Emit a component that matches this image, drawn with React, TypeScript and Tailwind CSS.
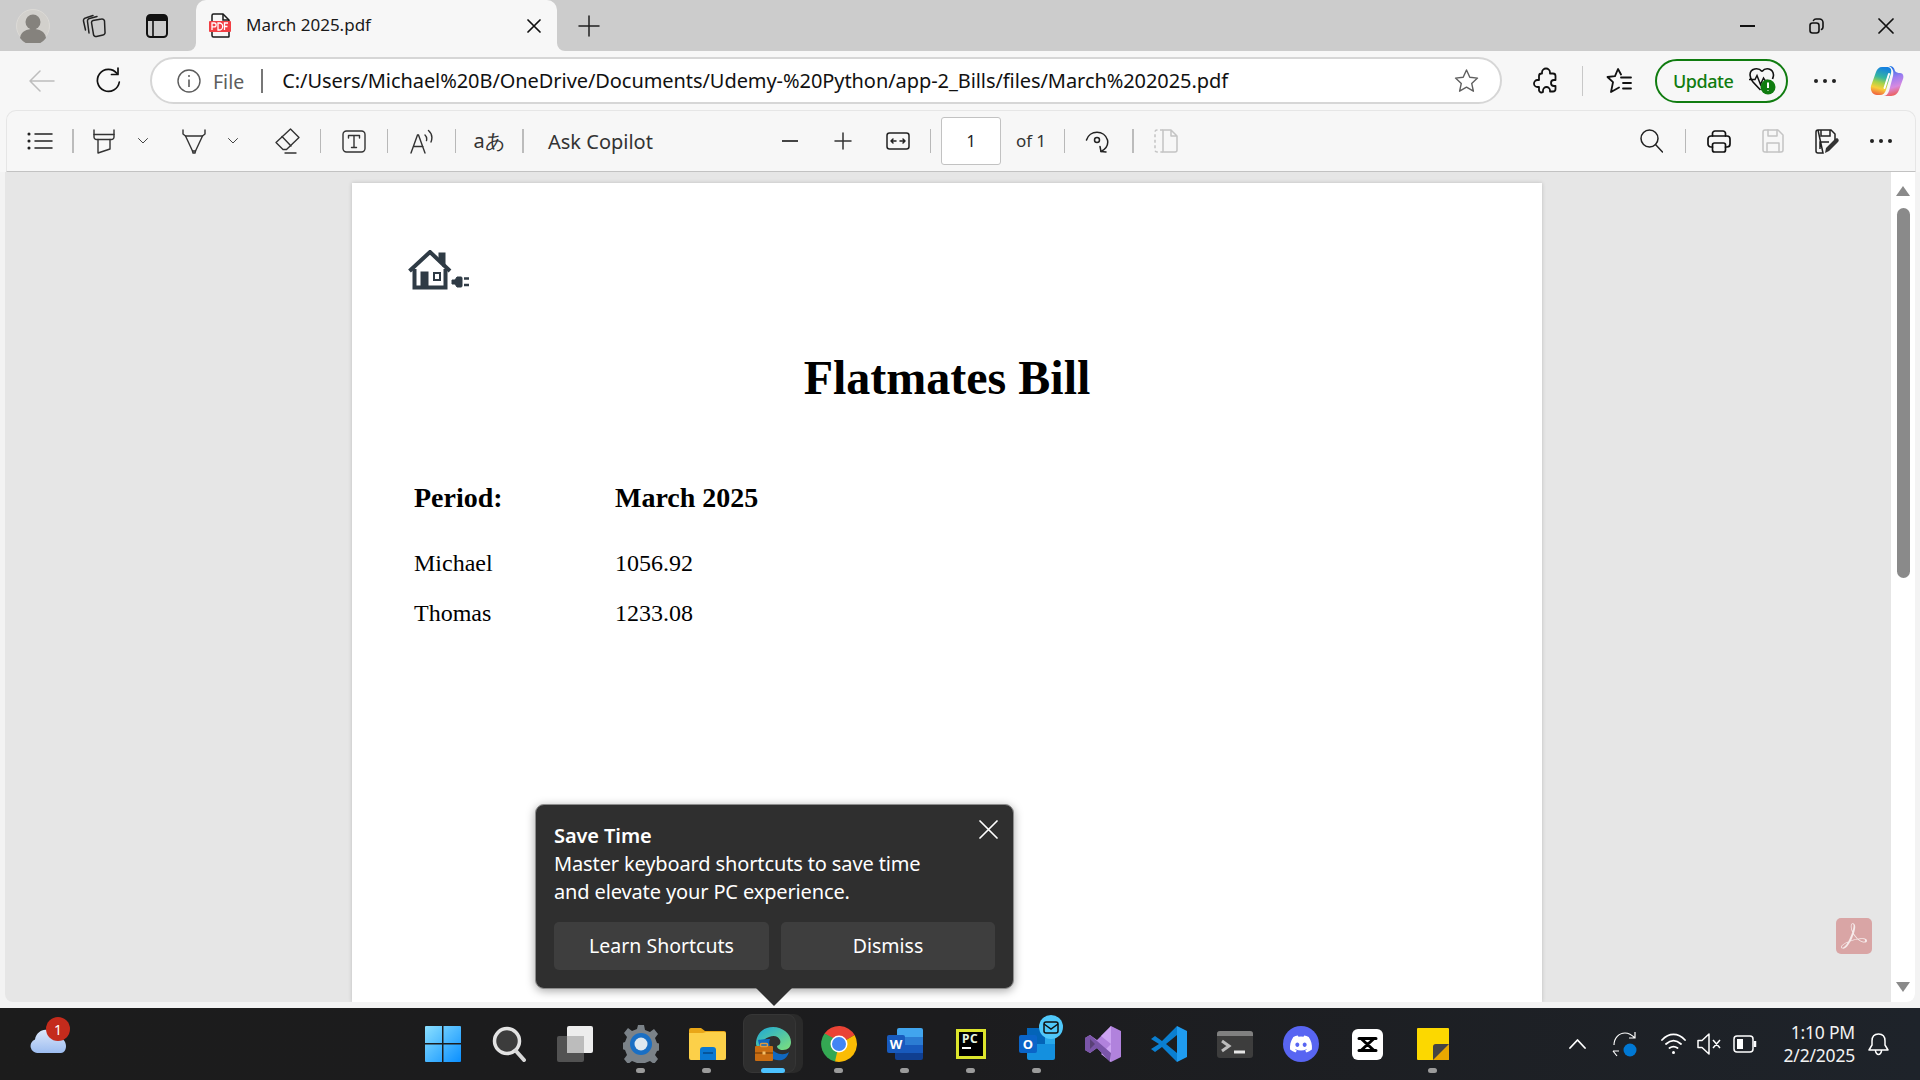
import { ReactNode } from 'react';
import { FaDiscord } from 'react-icons/fa6';
import { SiAdobeacrobatreader } from 'react-icons/si';

const uiFont = 'font-["Noto_Sans",sans-serif]';

const Slot = ({ w, children }: { w: string; children?: ReactNode }) => (
  <div className={`${w} h-full shrink-0 flex items-center justify-center`}>{children}</div>
);

const Sep = () => <div className="w-px h-[24px] shrink-0 bg-[#b8b8b8]" />;
const SepBold = () => <div className="w-[2px] h-[24px] shrink-0 bg-[#bcbcbc]" />;

const Ico = ({ w, h, vb, children, sw = 1.6, stroke = '#1f1f1f' }: { w: number; h: number; vb: string; children: ReactNode; sw?: number; stroke?: string }) => (
  <svg width={w} height={h} viewBox={vb} fill="none" stroke={stroke} strokeWidth={sw} strokeLinecap="round" strokeLinejoin="round">
    {children}
  </svg>
);

const Chevron = () => (
  <Ico w={10} h={6} vb="0 0 10 6" sw={1} stroke="#444"><path d="M.5.5 5 5 9.5.5" /></Ico>
);

const Dots = () => (
  <div className="flex gap-[5px]">
    <i className="w-[4px] h-[4px] rounded-full bg-[#222]" />
    <i className="w-[4px] h-[4px] rounded-full bg-[#222]" />
    <i className="w-[4px] h-[4px] rounded-full bg-[#222]" />
  </div>
);

const TabBar = () => (
  <div className="h-[51px] shrink-0 bg-[#cccccc] flex items-center">
    <Slot w="w-[66px]">
      <svg width="34" height="34" viewBox="0 0 34 34">
        <circle cx="17" cy="17" r="16.5" fill="#d2d0cc" stroke="#dcdad6" />
        <circle cx="17" cy="13" r="7.5" fill="#85827d" />
        <path d="M4 29c1-7 7-9 13-9s12 2 13 9a16 16 0 0 1-26 0Z" fill="#85827d" />
      </svg>
    </Slot>
    <Slot w="w-[54px]">
      <Ico w={25} h={24} vb="0 0 25 24" sw={1.5} stroke="#222">
        <path d="M10.500 8.500a2 2 0 0 1 1.500-2l8.500-1.500a2.500 2.500 0 0 1 3 2l.5 11a2.500 2.500 0 0 1-2 3l-6.500 1.500a2.500 2.500 0 0 1-3-2Z" />
        <path d="M8 19 6.500 7.500a2.500 2.500 0 0 1 2-3L16 2.500" />
        <path d="M4.500 16 2.500 7a2.500 2.500 0 0 1 2-3L12 1.500" />
      </Ico>
    </Slot>
    <div className="w-[3px] shrink-0" />
    <Slot w="w-[67px]">
      <svg width="22" height="24" viewBox="0 0 22 24" fill="none">
        <rect x="1" y="1" width="20" height="22" rx="3.500" stroke="#111" strokeWidth="2" />
        <path d="M1 4.500a3.500 3.500 0 0 1 3.500-3.500h13A3.500 3.500 0 0 1 21 4.500V7H1Z" fill="#111" />
        <path d="M7 7v16" stroke="#111" strokeWidth="1.600" />
      </svg>
    </Slot>
    <div className="relative w-[361px] h-full shrink-0 ml-[6px] bg-[#f7f7f7] rounded-t-[10px] flex items-center">
      <svg className="absolute -left-[8px] bottom-0" width="8" height="8" viewBox="0 0 8 8"><path d="M8 0v8H0a8 8 0 0 0 8-8Z" fill="#f7f7f7" /></svg>
      <svg className="absolute -right-[8px] bottom-0" width="8" height="8" viewBox="0 0 8 8"><path d="M0 0v8h8a8 8 0 0 1-8-8Z" fill="#f7f7f7" /></svg>
      <div className="w-[50px] flex justify-center">
        <svg width="24" height="25" viewBox="0 0 24 25" fill="none">
          <path d="M3 9V2.500A1.500 1.500 0 0 1 4.500 1H14l6 6v16.500a.5.5 0 0 1-.5.500H4.500A1.500 1.500 0 0 1 3 22.500V18" stroke="#1a1a1a" strokeWidth="1.500" />
          <path d="M14 1v6h6" stroke="#1a1a1a" strokeWidth="1.500" />
          <rect x="0" y="8" width="22" height="11" rx="1" fill="#f23f44" />
          <path d="M3 17v-7h2.200a1.600 1.600 0 0 1 0 3.800H3M9 10v7h1.200a2.500 2.500 0 0 0 0-7ZM15.500 17v-7h3.500M15.500 13.500h3" stroke="#fff" strokeWidth="1.300" />
        </svg>
      </div>
      <span className="-mt-[2px] text-[17px] text-[#1a1a1a]">March 2025.pdf</span>
      <div className="ml-auto mr-[16px]">
        <Ico w={14} h={14} vb="0 0 14 14" sw={1.7} stroke="#111"><path d="m1 1 12 12M13 1 1 13" /></Ico>
      </div>
    </div>
    <Slot w="w-[64px]">
      <Ico w={22} h={22} vb="0 0 22 22" sw={1.5}><path d="M11 1v20M1 11h20" /></Ico>
    </Slot>
    <div className="ml-auto flex h-full items-center">
      <Slot w="w-[69px]"><div className="w-[15px] h-[2px] bg-[#111]" /></Slot>
      <Slot w="w-[69px]">
        <Ico w={15} h={16} vb="0 0 15 16" sw={1.6} stroke="#111">
          <rect x="1" y="5" width="9" height="10" rx="2.500" />
          <path d="M4.500 2.500c.5-1 1.500-1.500 2.500-1.500h3.500A3.500 3.500 0 0 1 14 4.500V9c0 1-.5 2-1.500 2.500" />
        </Ico>
      </Slot>
      <Slot w="w-[69px]"><Ico w={16} h={16} vb="0 0 16 16" sw={1.7} stroke="#111"><path d="m1 1 14 14M15 1 1 15" /></Ico></Slot>
    </div>
  </div>
);

const AddressBar = () => (
  <div className="h-[59px] shrink-0 bg-[#f7f7f7] flex items-center">
    <div className="w-[9px] shrink-0" />
    <Slot w="w-[66px]">
      <Ico w={26} h={24} vb="0 0 26 24" sw={1.5} stroke="#bdbdbd"><path d="M25 12H1M11 2 1 12l10 10" /></Ico>
    </Slot>
    <Slot w="w-[66px]">
      <Ico w={26} h={27} vb="0 0 26 27" sw={1.7} stroke="#111">
        <path d="M22 6.500A11 11 0 1 0 24.300 15" />
        <path d="M23 1v6.500h-6.500" />
      </Ico>
    </Slot>
    <div className="ml-[9px] w-[1352px] h-[47px] shrink-0 bg-white border-2 border-[#d6d6d6] rounded-full flex items-center">
      <div className="w-[36px] shrink-0 ml-[13px] flex justify-end">
        <svg width="24" height="24" viewBox="0 0 24 24" fill="none" stroke="#5c5c5c" strokeWidth="1.400">
          <circle cx="12" cy="12" r="11" />
          <path d="M12 10.500V18" strokeWidth="1.600" />
          <circle cx="12" cy="7" r="1" fill="#5c5c5c" stroke="none" />
        </svg>
      </div>
      <span className="ml-[12px] mt-[2px] text-[19.500px] text-[#5d5d5d]">File</span>
      <div className="ml-[17px] w-[2px] h-[24px] bg-[#777]" />
      <span className="ml-[19px] mt-[1px] text-[20px] text-[#111] whitespace-nowrap tracking-[-0.07px]">C:/Users/Michael%20B/OneDrive/Documents/Udemy-%20Python/app-2_Bills/files/March%202025.pdf</span>
      <div className="ml-auto mr-[21px]">
        <Ico w={25} h={24} vb="0 0 25 24" sw={1.4} stroke="#5f5f5f"><path d="m12.500 1 3.300 7.300 7.700.8-5.800 5.300 1.700 7.800-6.900-4-6.900 4 1.700-7.800L1.500 9.100l7.700-.8Z" /></Ico>
      </div>
    </div>
    <div className="w-[22px] shrink-0" />
    <Slot w="w-[42px]">
      <Ico w={24} h={28} vb="0 0 24 28" sw={1.8} stroke="#111">
        <path d="M9 5.500C9 3 11 1.500 13 1.500s4 1.500 4 4v1h3a2.500 2.500 0 0 1 2.500 2.500v4h-1.500a3 3 0 0 0 0 6h1.500v3A2.500 2.500 0 0 1 20 24.500h-3v-1a3.500 3.500 0 0 0-7 0v1.500c-1.500 1-3.500.5-4-1.500v-3.500H4.500a3.500 3.500 0 0 1 0-7H6V9a2.500 2.500 0 0 1 2.500-2.500H9Z" />
      </Ico>
    </Slot>
    <div className="w-[16px] shrink-0" />
    <div className="w-px h-[30px] bg-[#c8c8c8] shrink-0" />
    <Slot w="w-[72px]">
      <Ico w={26} h={26} vb="0 0 26 26" sw={1.8} stroke="#111">
        <path d="M15 6.500 12 1 9 8.200 1.500 9l5.500 5.200L5 24l8-4.500" />
        <path d="M15 9.500h10M17 15h8M17 20.500h8" />
      </Ico>
    </Slot>
    <div className="w-[133px] h-[44px] shrink-0 border-2 border-[#107c10] rounded-full flex items-center">
      <span className="ml-[16px] mt-[1px] text-[18px] tracking-[-0.45px] text-[#107c10] font-medium">Update</span>
      <svg className="ml-[15px]" width="28" height="28" viewBox="0 0 28 28" fill="none">
        <path d="M14 4.500C10.500 0 2 1 2 8c0 3 1.500 5 3 7l7.500 8" stroke="#111" strokeWidth="1.600" />
        <path d="M14 4.500C17.500 0 25 1 25.500 8c0 1.500-.5 2.500-1 4" stroke="#111" strokeWidth="1.600" />
        <path d="M1 12.500h6l2-4 3.500 9 3-6.500 1.500 2.500h3" stroke="#111" strokeWidth="1.500" />
        <circle cx="20" cy="20" r="7.500" fill="#107c10" />
        <path d="M20 15.500v5.500M20 23.500v.5" stroke="#fff" strokeWidth="2" />
      </svg>
    </div>
    <Slot w="w-[74px]"><Dots /></Slot>
    <Slot w="w-[50px]">
      <svg width="34" height="30" viewBox="0 0 34 30">
        <defs>
          <linearGradient id="cpL" x1="0.5" y1="0" x2="0.3" y2="1">
            <stop offset="0" stopColor="#1581e0" /><stop offset=".35" stopColor="#35b6a0" /><stop offset=".55" stopColor="#a6d24a" /><stop offset=".75" stopColor="#f8cf3a" /><stop offset="1" stopColor="#f0603f" />
          </linearGradient>
          <linearGradient id="cpR" x1="0.4" y1="0" x2="0.6" y2="1">
            <stop offset="0" stopColor="#0f6fe6" /><stop offset=".4" stopColor="#9d7df0" /><stop offset=".7" stopColor="#d88ae0" /><stop offset="1" stopColor="#ef5a4a" />
          </linearGradient>
        </defs>
        <path d="M12 1c-3 0-5 2-6 5L1 20c-1 5 2 9 6 9h3c3 0 5-2 6-5l5-17c1-4-1-6-4-6Z" fill="url(#cpL)" />
        <path d="M19 0c3 0 5 1 6 5 1 1.500 3 2 5 2 3 0 4 3 3 6l-4 11c-1 3-4 6-8 6h-8c3 0 5-2 6-5l4-15c1-4 0-8-4-10Z" fill="url(#cpR)" />
        <path d="M19 8 14.500 22" stroke="#fff" strokeWidth="2" strokeLinecap="round" />
      </svg>
    </Slot>
  </div>
);

const PdfToolbar = () => (
  <div className="pl-[6px] pr-[4px] bg-[#f7f7f7] shrink-0">
    <div className="h-[62px] bg-[#f7f7f7] border-t border-l border-r border-b border-t-[#e6e6e6] border-l-[#e6e6e6] border-r-[#e6e6e6] border-b-[#c2c2c2] rounded-t-[10px] flex items-center">
      <Slot w="w-[65px]">
        <Ico w={26} h={18} vb="0 0 26 18" sw={1.5} stroke="#222">
          <path d="M8 2h17M8 9h17M8 16h17" />
          <circle cx="2" cy="2" r=".8" fill="#222" />
          <circle cx="2" cy="9" r=".8" fill="#222" />
          <circle cx="2" cy="16" r=".8" fill="#222" />
        </Ico>
      </Slot>
      <SepBold />
      <div className="w-px shrink-0" />
      <Slot w="w-[58px]">
        <Ico w={22} h={25} vb="0 0 22 25" sw={1.4} stroke="#333">
          <path d="M1 1v7a2.500 2.500 0 0 0 2.500 2.500h15A2.500 2.500 0 0 0 21 8V1" />
          <path d="M1 5.500h20" />
          <path d="M5 10.500V24l12-4v-9.500" />
        </Ico>
      </Slot>
      <Slot w="w-[20px]"><Chevron /></Slot>
      <div className="w-[7px] shrink-0" />
      <Slot w="w-[68px]">
        <Ico w={24} h={25} vb="0 0 24 25" sw={1.4} stroke="#333">
          <path d="M1 1v4l2.500 2h17L23 5V1" />
          <path d="M3.500 7 10.500 22h3L20.500 7" />
          <path d="M10.500 22l.5 2h2l.5-2" />
        </Ico>
      </Slot>
      <Slot w="w-[10px]"><Chevron /></Slot>
      <div className="w-[16px] shrink-0" />
      <Slot w="w-[66px]">
        <Ico w={25} h={26} vb="0 0 25 26" sw={1.4} stroke="#333">
          <path d="M15.500 1 24 9.500 11.500 21.500H8L1 14.500Z" />
          <path d="M7 8.500 16 18" />
          <path d="M10 25h11" />
        </Ico>
      </Slot>
      <Sep />
      <Slot w="w-[66px]">
        <Ico w={24} h={23} vb="0 0 24 23" sw={1.4} stroke="#333">
          <rect x="1" y="1" width="22" height="21" rx="3.500" />
          <path d="M6.500 8V5.500h11V8M12 5.500v12M9.500 17.500h5" />
        </Ico>
      </Slot>
      <Sep />
      <Slot w="w-[67px]">
        <svg width="24" height="25" viewBox="0 0 24 25" fill="none" stroke="#333" strokeWidth="1.400" strokeLinecap="round">
          <path d="m1 24 6.500-18h1L15 24M3.500 17.500h9.500" />
          <path d="M15 6c1.500 1.500 2 3.500 1.500 5.500M18.500 1.500c3.500 3 4 7.500 2.500 11.500" />
        </svg>
      </Slot>
      <Sep />
      <Slot w="w-[66px]">
        <span className="text-[20px] leading-none text-[#333]">aあ</span>
      </Slot>
      <SepBold />
      <span className="ml-[24px] mt-[2px] w-[212px] shrink-0 text-[20px] text-[#333]">Ask Copilot</span>
      <Slot w="w-[60px]"><div className="w-[16px] h-[1.500px] bg-[#444]" /></Slot>
      <Slot w="w-[46px]"><Ico w={18} h={18} vb="0 0 18 18" sw={1.5} stroke="#333"><path d="M9 1v16M1 9h16" /></Ico></Slot>
      <Slot w="w-[64px]">
        <Ico w={24} h={18} vb="0 0 24 18" sw={1.5} stroke="#222">
          <rect x="1" y="1" width="22" height="16" rx="2.500" />
          <path d="M5 9h5M5 9l2-2M5 9l2 2M14 9h5M19 9l-2-2M19 9l-2 2" />
        </Ico>
      </Slot>
      <Sep />
      <div className="ml-[10px] w-[60px] h-[48px] shrink-0 bg-white border border-[#c2c2c2] rounded-[3px] flex items-center justify-center text-[16px] text-[#222]">1</div>
      <span className="ml-[15px] w-[49px] shrink-0 text-[17px] tracking-[-0.1px] text-[#333]">of 1</span>
      <div className="-ml-[1px]"><Sep /></div>
      <Slot w="w-[64px]">
        <svg width="24" height="26" viewBox="0 0 24 26" fill="none" stroke="#222" strokeWidth="1.500" strokeLinecap="round" strokeLinejoin="round">
          <path d="M1.500 12a11 11 0 0 1 21 0c1 5-1.500 9-6.500 11.500" />
          <circle cx="12" cy="12" r="2.500" />
          <path d="m15 18.500 1 5 5 .5" />
        </svg>
      </Slot>
      <div className="w-[3px] shrink-0" />
      <SepBold />
      <Slot w="w-[64px]">
        <svg width="24" height="24" viewBox="0 0 24 24" fill="none" stroke="#c4c4c4" strokeWidth="1.500" strokeLinejoin="round">
          <path d="M9 1H3a2 2 0 0 0-2 2v18a2 2 0 0 0 2 2h6" strokeDasharray="3 2.500" />
          <path d="M9 1h8l6 6v14a2 2 0 0 1-2 2H9ZM17 1v6h6" />
        </svg>
      </Slot>
      <div className="ml-auto flex h-full items-center">
        <Slot w="w-[68px]">
          <Ico w={23} h={24} vb="0 0 23 24" sw={1.5} stroke="#222"><circle cx="9.500" cy="9.500" r="8.500" /><path d="m15.500 15.500 7 7.500" /></Ico>
        </Slot>
        <Sep />
        <div className="w-[13px] shrink-0" />
        <Slot w="w-[40px]">
          <Ico w={24} h={23} vb="0 0 24 23" sw={1.7} stroke="#111">
            <path d="M5.500 6V3.500A2.500 2.500 0 0 1 8 1h8a2.500 2.500 0 0 1 2.500 2.500V6" />
            <path d="M5.500 17H4a3 3 0 0 1-3-3V9a3 3 0 0 1 3-3h16a3 3 0 0 1 3 3v5a3 3 0 0 1-3 3h-1.500" />
            <rect x="5.500" y="13" width="13" height="9" rx="2" />
          </Ico>
        </Slot>
        <Slot w="w-[68px]">
          <Ico w={22} h={24} vb="0 0 22 24" sw={1.5} stroke="#c4c4c4">
            <path d="M3 1h13l5 5v15a2 2 0 0 1-2 2H3a2 2 0 0 1-2-2V3a2 2 0 0 1 2-2Z" />
            <path d="M6 1v6h9V1M5 23v-9h12v9" />
          </Ico>
        </Slot>
        <Slot w="w-[40px]">
          <svg width="24" height="25" viewBox="0 0 24 25" fill="none">
            <path d="M3 1h13l4 4v6M8 24H3a2 2 0 0 1-2-2V3a2 2 0 0 1 2-2ZM6 1v6h9V1M5 20v-7h9" stroke="#222" strokeWidth="1.500" />
            <path d="m10 24 1-5 9-9c1-1 3-1 3.500.5.500 1 0 2-.5 2.500l-9 9Z" fill="#333" />
          </svg>
        </Slot>
        <Slot w="w-[68px]"><Dots /></Slot>
      </div>
    </div>
  </div>
);

const HouseLogo = () => (
  <svg width="62" height="40" viewBox="0 0 62 40" fill="none" stroke="#2f3b45">
    <path d="M1.500 21 22 2l20 19" strokeWidth="4" />
    <path d="M32 10V4h4v13" strokeWidth="3" fill="#2f3b45" />
    <path d="M6.500 19v18.500h31V19" strokeWidth="4" />
    <rect x="13" y="22" width="7" height="15" fill="#2f3b45" strokeWidth="1" />
    <rect x="26" y="23" width="6" height="7" strokeWidth="2" />
    <path d="M44 30h3l2-3h4a1 1 0 0 1 1 1v8a1 1 0 0 1-1 1h-4l-2-3h-3Z" fill="#2f3b45" strokeWidth="1" />
    <path d="M56 28.500h5M56 35h5" strokeWidth="2.500" />
  </svg>
);

const PdfViewer = () => (
  <div className="relative flex-1 min-h-0 bg-[#e6e6e6] ml-[5px] mr-[5px] rounded-bl-[8px] rounded-br-[8px] overflow-hidden flex">
    <div className="w-[347px] shrink-0" />
    <div className="w-[1190px] shrink-0 mt-[11px] bg-white shadow-[0_0_4px_rgba(0,0,0,0.18)] pt-[67px] pl-[56px] font-['Liberation_Serif',serif] text-black">
      <HouseLogo />
      <div className="mt-[60px] -ml-[56px] text-center text-[48px] leading-[56px] font-bold">Flatmates Bill</div>
      <div className="mt-[78px] ml-[6px] grid grid-cols-[201px_1fr] text-[24px] leading-[28px]">
        <div className="font-bold text-[28px] h-[65px]">Period:</div>
        <div className="font-bold text-[28px]">March 2025</div>
        <div className="h-[50px]">Michael</div>
        <div>1056.92</div>
        <div>Thomas</div>
        <div>1233.08</div>
      </div>
    </div>
    <div className="ml-auto w-[24px] shrink-0 bg-white flex flex-col items-center relative">
      <div className="mt-[14px] w-0 h-0 border-l-[7px] border-r-[7px] border-b-[10px] border-l-transparent border-r-transparent border-b-[#8a8a8a]" />
      <div className="mt-[12px] w-[13px] h-[370px] rounded-full bg-[#8a8a8a]" />
      <div className="mt-auto mb-[10px] w-0 h-0 border-l-[7px] border-r-[7px] border-t-[10px] border-l-transparent border-r-transparent border-t-[#8a8a8a]" />
    </div>
    <div className="absolute left-[1831px] top-[746px] w-[36px] h-[36px] rounded-[5px] bg-[#d9a5a5] flex items-center justify-center">
      <SiAdobeacrobatreader className="w-[26px] h-[26px] text-[#f6eaea]" />
    </div>
  </div>
);

const Tooltip = () => (
  <div className={`absolute left-[535px] top-[804px] w-[479px] h-[185px] bg-[#2f2f2f] border border-[#8d8d8d] rounded-[9px] shadow-[0_2px_10px_rgba(0,0,0,0.35)] ${uiFont} text-white`}>
    <div className="pt-[17px] pl-[18px] text-[20px] leading-[28px]">
      <div className="font-semibold tracking-[-0.1px]">Save Time</div>
      <div className="tracking-[-0.13px]">Master keyboard shortcuts to save time</div>
      <div className="tracking-[-0.13px]">and elevate your PC experience.</div>
    </div>
    <div className="absolute left-[443px] top-[15px]">
      <Ico w={19} h={19} vb="0 0 19 19" sw={1.700} stroke="#fff"><path d="m1 1 17 17M18 1 1 18" /></Ico>
    </div>
    <div className="mt-[16px] ml-[18px] flex gap-[12px] text-[19.500px]">
      <div className="w-[215px] h-[48px] rounded-[5px] bg-[#3e3e3e] flex items-center justify-center">Learn Shortcuts</div>
      <div className="w-[214px] h-[48px] rounded-[5px] bg-[#3e3e3e] flex items-center justify-center">Dismiss</div>
    </div>
    <div className="absolute left-[220px] top-[183px] w-0 h-0 border-l-[18px] border-r-[18px] border-t-[18px] border-l-transparent border-r-transparent border-t-[#2f2f2f]" />
  </div>
);

const AppIcon = ({ dot, active, children }: { dot?: boolean; active?: boolean; children: ReactNode }) => (
  <div className="relative w-[66px] h-full shrink-0 flex items-center justify-center">
    {active && (
      <>
        <div className="absolute left-[30px] top-[6px] w-[33px] h-[59px] rounded-[9px] bg-[#2a2a2a]" />
        <div className="absolute left-[3px] top-[6px] w-[53px] h-[59px] rounded-[9px] bg-[#2e2e2e] border border-[#363636]" />
      </>
    )}
    <div className="relative">{children}</div>
    {dot && <div className="absolute left-[28px] bottom-[7px] w-[9px] h-[5px] rounded-full bg-[#9b9b9b]" />}
    {active && <div className="absolute left-[21px] bottom-[7px] w-[24px] h-[5px] rounded-full bg-[#4cc2ff]" />}
  </div>
);

const StartLogo = () => (
  <svg width="36" height="36" viewBox="0 0 36 36">
    <defs>
      <linearGradient id="st" x1="0" y1="0" x2="1" y2="1"><stop offset="0" stopColor="#8be0ff" /><stop offset="1" stopColor="#0a8fff" /></linearGradient>
    </defs>
    <path d="M1 0h16v17H0V1a1 1 0 0 1 1-1ZM18.500 0H35a1 1 0 0 1 1 1v16H18.500ZM0 18.500h17V36H1a1 1 0 0 1-1-1ZM18.500 18.500H36V35a1 1 0 0 1-1 1H18.500Z" fill="url(#st)" />
  </svg>
);

const Taskbar = () => (
  <div className={`h-[72px] shrink-0 flex items-center bg-gradient-to-r from-[#1c1c1c] via-[#1c1c1e] to-[#1e232a] ${uiFont}`}>
    <div className="relative w-[410px] h-full shrink-0">
      <svg className="absolute left-[30px] top-[20px]" width="37" height="25" viewBox="0 0 37 25">
        <defs><linearGradient id="cl" x1="0" y1="0" x2="0" y2="1"><stop offset="0" stopColor="#dbe7fb" /><stop offset="1" stopColor="#9dbdf0" /></linearGradient></defs>
        <path d="M8 25a7 7 0 0 1-3-13.500C6 5 12 1 17 2c5 0 9 3 10 7 5 0 9 4 9 9 0 4-2 7-5 7Z" fill="url(#cl)" />
      </svg>
      <div className="absolute left-[46px] top-[9px] w-[24px] h-[24px] rounded-full bg-[#c42b1c] flex items-center justify-center text-white text-[14px]">1</div>
    </div>
    <div className="flex h-full">
      <AppIcon><StartLogo /></AppIcon>
      <AppIcon>
        <svg width="34" height="36" viewBox="0 0 34 36" fill="none">
          <circle cx="15" cy="15" r="12.500" fill="#3c3c3c" stroke="#e3e3e3" strokeWidth="3.500" />
          <path d="m24 25 8 9" stroke="#d8d8d8" strokeWidth="4" strokeLinecap="round" />
        </svg>
      </AppIcon>
      <AppIcon>
        <svg width="36" height="36" viewBox="0 0 36 36">
          <rect x="10" y="0" width="26" height="27" rx="2" fill="#ededed" />
          <rect x="0" y="10" width="27" height="26" rx="2" fill="#5c5c5c" fillOpacity=".85" />
          <rect x="10" y="10" width="17" height="17" fill="#bcbcbc" />
        </svg>
      </AppIcon>
      <AppIcon dot>
        <svg width="36" height="38" viewBox="0 0 36 38">
          <path d="M15 0h6l1 5 5 2 4-3 4 5-3 4 2 5 4 1v6l-4 1-2 4 3 4-4 5-4-3-5 2-1 4h-6l-1-4-5-2-4 3-4-5 3-4-2-5-3-1v-6l3-1 2-5-3-4 4-5 4 3 5-2Z" fill="#7b8288" />
          <circle cx="18" cy="19" r="11" fill="#1a6fc4" />
          <circle cx="18" cy="19" r="6.500" fill="#dfe8ef" />
        </svg>
      </AppIcon>
      <AppIcon dot>
        <svg width="37" height="32" viewBox="0 0 37 32">
          <path d="M0 2a2 2 0 0 1 2-2h10l4 3h19a2 2 0 0 1 2 2v3H0Z" fill="#e9a617" />
          <path d="M0 5h14l3-1h18a2 2 0 0 1 2 2v24a2 2 0 0 1-2 2H2a2 2 0 0 1-2-2Z" fill="#fcd049" />
          <path d="M11 22a3 3 0 0 1 3-3h10a3 3 0 0 1 3 3v10H11Z" fill="#0a78d2" />
          <path d="M14 25h10" stroke="#054a8a" strokeWidth="1.500" />
        </svg>
      </AppIcon>
      <AppIcon active>
        <svg width="36" height="36" viewBox="0 0 36 36" fill="none">
          <defs>
            <linearGradient id="eg" x1="0" y1="0" x2="1" y2="1"><stop offset="0" stopColor="#1ca7d8" /><stop offset="1" stopColor="#7fe07a" /></linearGradient>
          </defs>
          <path d="M1 18C1 8 8 1 18 1s18 7 18 15c0 5-3 8-8 8-4 0-6-2-6-4 3-1 4-3 3-6-2-4-6-5-11-3-6 2-8 6-9 11-3-1-4-2-4-4Z" fill="url(#eg)" />
          <path d="M3 14c2 14 14 22 24 20 3-1 6-4 7-8-4 3-9 3-14 0-5-3-7-8-5-13-6 0-10 1-12 1Z" fill="#1068c0" />
          <rect x="0" y="20" width="18" height="15" rx="1" fill="#c96d12" />
          <rect x="5.500" y="17.500" width="7" height="3" rx="1" fill="none" stroke="#e19a3d" strokeWidth="1.500" />
          <path d="M0 27h18" stroke="#8a4a08" strokeWidth="1.500" />
          <rect x="7.500" y="25.500" width="3" height="3" fill="#f4c06a" />
        </svg>
      </AppIcon>
      <AppIcon dot>
        <svg width="36" height="36" viewBox="0 0 36 36">
          <path d="M18 18 3.500 7.500A18 18 0 0 1 33.600 9Z" fill="#ea4335" />
          <path d="M3.500 7.500A18 18 0 0 0 14 35.500L24 18Z" fill="#34a853" />
          <path d="M33.600 9A18 18 0 0 1 14 35.500L18 18Z" fill="#fbbc05" />
          <circle cx="18" cy="18" r="8.500" fill="#fff" />
          <circle cx="18" cy="18" r="7" fill="#4285f4" />
        </svg>
      </AppIcon>
      <AppIcon dot>
        <svg width="36" height="32" viewBox="0 0 36 32">
          <path d="M10 2a2 2 0 0 1 2-2h22a2 2 0 0 1 2 2v7H10Z" fill="#41a5ee" />
          <rect x="8" y="9" width="28" height="8" fill="#2b7cd3" />
          <rect x="8" y="17" width="28" height="8" fill="#185abd" />
          <path d="M8 25h28v5a2 2 0 0 1-2 2H10a2 2 0 0 1-2-2Z" fill="#103f91" />
          <rect x="0" y="7" width="18" height="18" rx="2" fill="#185abd" />
          <text x="9" y="21" textAnchor="middle" fontSize="13" fontWeight="700" fill="#fff" fontFamily="Noto Sans, sans-serif">W</text>
        </svg>
      </AppIcon>
      <AppIcon dot>
        <div className="w-[30px] h-[30px] bg-black border-[3px] border-[#dde52c] flex flex-col pl-[3px] text-[#e6f5e0] leading-none">
          <span className="text-[12px] font-bold tracking-[0.5px] mt-[1px]">PC</span>
          <div className="mt-[2px] w-[9px] h-[2px] bg-white" />
        </div>
      </AppIcon>
      <AppIcon dot>
        <div className="relative w-[36px] h-[32px]">
          <svg width="36" height="32" viewBox="0 0 36 32">
            <path d="M8 0h18v16H8Z" fill="#0364b8" />
            <path d="M26 8h8a2 2 0 0 1 2 2v8H26Z" fill="#28a8ea" />
            <path d="M8 16h28v14a2 2 0 0 1-2 2H10a2 2 0 0 1-2-2Z" fill="#1490df" />
            <rect x="0" y="7" width="18" height="18" rx="2" fill="#0a64c8" />
            <text x="9" y="21" textAnchor="middle" fontSize="13" fontWeight="700" fill="#fff" fontFamily="Noto Sans, sans-serif">O</text>
          </svg>
          <div className="absolute left-[20px] -top-[13px] w-[24px] h-[24px] rounded-full bg-[#50c8fa] flex items-center justify-center">
            <svg width="16" height="13" viewBox="0 0 16 13" fill="none" stroke="#111" strokeWidth="1.500"><rect x="1" y="1" width="14" height="11" rx="2" /><path d="m1 3 7 5 7-5" /></svg>
          </div>
        </div>
      </AppIcon>
      <AppIcon>
        <svg width="36" height="36" viewBox="0 0 36 36">
          <path d="M26 0 36 5v26l-10 5-14-14-7 5-5-3V12l5-3 7 5Z" fill="#b182dd" />
          <path d="M26 0v36l-10-8 10-10-10-8Z" fill="#cda4f2" />
          <path d="M0 12l5-3 21 18-1 9-13-14-7 5-5-3Z" fill="#7a55a8" />
          <path d="M5 13v10l5-5Z" fill="#1c1c1e" fillOpacity=".35" />
        </svg>
      </AppIcon>
      <AppIcon>
        <svg width="36" height="36" viewBox="0 0 36 36">
          <path d="M26 0 36 5v26l-10 5V0Z" fill="#1f9cf0" />
          <path d="M26 0 11 15 4 10l-4 3 8 5-8 5 4 3 7-5 15 15v-9L15 18 26 9Z" fill="#0a7fd1" />
        </svg>
      </AppIcon>
      <AppIcon>
        <svg width="36" height="27" viewBox="0 0 36 27">
          <rect width="36" height="27" rx="3" fill="#3d3d3d" />
          <path d="M0 3a3 3 0 0 1 3-3h30a3 3 0 0 1 3 3v2H0Z" fill="#808080" />
          <path d="m5 10 7 5-7 5" fill="none" stroke="#bdbdbd" strokeWidth="3" />
          <path d="M17 21h11" stroke="#e6e6e6" strokeWidth="3" />
        </svg>
      </AppIcon>
      <AppIcon>
        <div className="w-[36px] h-[36px] rounded-full bg-[#5865f2] flex items-center justify-center">
          <FaDiscord className="w-[24px] h-[24px] text-white" />
        </div>
      </AppIcon>
      <AppIcon>
        <svg width="31" height="31" viewBox="0 0 31 31">
          <rect width="31" height="31" rx="6" fill="#fff" />
          <path d="M7 9.500h17M7 21.500h17M9 9.500l13 12M22 9.500 9 21.500" fill="none" stroke="#000" strokeWidth="3" strokeLinecap="round" />
        </svg>
      </AppIcon>
      <AppIcon dot>
        <svg width="32" height="32" viewBox="0 0 32 32">
          <rect width="32" height="32" rx="1" fill="#fcd800" />
          <path d="M16 32V19a3 3 0 0 1 3-3h13v15a1 1 0 0 1-1 1Z" fill="#eaa800" />
          <path d="M16 32V19a3 3 0 0 1 3-3h13Z" fill="#444" />
        </svg>
      </AppIcon>
    </div>
    <div className="relative flex-1 h-full flex items-center text-white">
      <div className="w-[89px] shrink-0" />
      <Slot w="w-[44px]"><Ico w={17} h={10} vb="0 0 17 10" sw={1.8} stroke="#fff"><path d="m1 9 7.500-8L16 9" /></Ico></Slot>
      <Slot w="w-[52px]">
        <svg width="26" height="27" viewBox="0 0 26 27" fill="none" stroke="#fff" strokeWidth="1.200">
          <path d="M2 14C2 7 7 2 13 2c4 0 7 2 10 5M23 1v6h-6M1 20l4 5M1 20h6" />
          <circle cx="18" cy="19" r="6.500" fill="#0078d4" stroke="none" />
        </svg>
      </Slot>
      <Slot w="w-[44px]">
        <svg width="25" height="22" viewBox="0 0 25 22" fill="none" stroke="#fff" strokeWidth="1.800" strokeLinecap="round">
          <path d="M1 7c7-7.500 16-7.500 23 0M5 11c5-4.500 10-4.500 15 0M8.500 15c3-2 5-2 8 0" />
          <circle cx="12.500" cy="19.500" r="1.500" fill="#fff" stroke="none" />
        </svg>
      </Slot>
      <Slot w="w-[28px]">
        <svg width="24" height="22" viewBox="0 0 24 22" fill="none" stroke="#fff" strokeWidth="1.500" strokeLinejoin="round"><path d="M1 7.500v7h4L12 21V1L5 7.500ZM16 7l7 8M23 7l-7 8" /></svg>
      </Slot>
      <Slot w="w-[44px]">
        <svg width="24" height="18" viewBox="0 0 24 18" fill="none"><rect x="1" y="1" width="19" height="16" rx="3" stroke="#fff" strokeWidth="1.500" /><rect x="4" y="4" width="6" height="10" fill="#fff" /><path d="M22 6v6" stroke="#fff" strokeWidth="2.500" /></svg>
      </Slot>
      <div className="flex-1 flex flex-col items-end justify-center text-[17.500px] leading-[23px] tracking-[-0.2px] text-[#f2f2f2] pb-[1px]">
        <span>1:10 PM</span>
        <span>2/2/2025</span>
      </div>
      <Slot w="w-[46px]">
        <svg width="21" height="23" viewBox="0 0 21 23" fill="none" stroke="#fff" strokeWidth="1.500" strokeLinejoin="round"><path d="M10.500 1C6 1 4 4 4 8v4l-3 5h19l-3-5V8c0-4-2-7-6.500-7ZM7.500 17.500c0 2 1.500 4 3 4s3-2 3-4" /></svg>
      </Slot>
      <div className="w-[19px] shrink-0" />
    </div>
  </div>
);

const App = () => (
  <div className={`relative w-[1920px] h-[1080px] overflow-hidden flex flex-col bg-[#f3f3f3] ${uiFont}`}>
    <TabBar />
    <AddressBar />
    <PdfToolbar />
    <PdfViewer />
    <div className="h-[6px] shrink-0" />
    <Taskbar />
    <Tooltip />
  </div>
);

export default App;
